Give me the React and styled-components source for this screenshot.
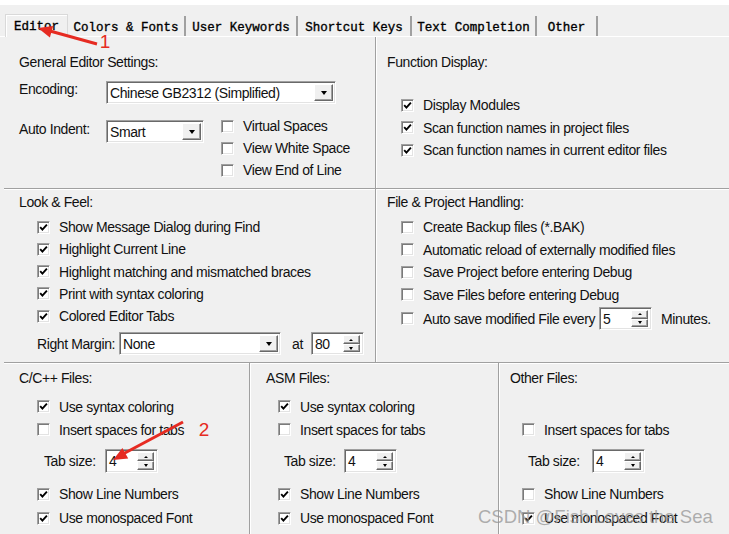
import React from "react";
import styled, { createGlobalStyle } from "styled-components";

const GlobalStyle = createGlobalStyle`
  html, body {
    margin: 0;
    padding: 0;
    background: #fff;
  }
  body {
    font-family: "Liberation Sans", Arial, sans-serif;
  }
`;

const Frame = styled.div`
  position: relative;
  width: 729px;
  height: 534px;
  padding-top: 5px;
  box-sizing: border-box;
  background: #fff;
  overflow: hidden;
`;

const Dialog = styled.div`
  height: 100%;
  background: #f0f0f0;
  display: flex;
  flex-direction: column;
  font-size: 14px;
  letter-spacing: -0.4px;
  color: #111;
`;

const TabBar = styled.div`
  display: flex;
  align-items: flex-end;
  height: 31px;
  padding-left: 5px;
  border-bottom: 1px solid #fff;
  flex: none;
`;

const Tab = styled.div`
  box-sizing: border-box;
  width: ${(p) => p.$w}px;
  height: ${(p) => (p.$active ? 23 : 20)}px;
  display: flex;
  align-items: center;
  justify-content: center;
  padding-top: 3px;
  font-family: "Liberation Mono", "Courier New", monospace;
  font-size: 12.5px;
  letter-spacing: 0;
  color: #000;
  -webkit-text-stroke: 0.35px #000;
  ${(p) =>
    p.$active
      ? `
    border: 1px solid #d9d9d9;
    border-bottom: none;
    box-shadow: inset 1px 1px 0 #fff;
    margin-bottom: -1px;
    padding-top: 1px;
    background: #f0f0f0;
  `
      : `
    border-right: 2px solid #a0a0a0;
  `}
`;

const Body = styled.div`
  flex: 1;
  display: flex;
  flex-direction: column;
  padding-left: 4px;
`;

const Row = styled.div`
  box-sizing: border-box;
  display: grid;
  grid-template-columns: ${(p) => p.$cols};
  height: ${(p) => (p.$h ? `${p.$h}px` : "auto")};
  flex: ${(p) => (p.$h ? "none" : "1")};
  ${(p) =>
    p.$line &&
    `
    border-bottom: 1px solid #a0a0a0;
    box-shadow: 0 1px 0 #fff;
  `}
`;

const Panel = styled.div`
  box-sizing: border-box;
  display: flex;
  flex-direction: column;
  align-items: flex-start;
  padding: ${(p) => p.$top}px 0 0 ${(p) => p.$left}px;
  ${(p) =>
    p.$divider &&
    `
    border-right: 1px solid #a0a0a0;
    box-shadow: 1px 0 0 #fff;
  `}
`;

const Title = styled.div`
  height: 16px;
  line-height: 16px;
  white-space: nowrap;
`;

const Line = styled.div`
  display: flex;
  align-items: ${(p) => p.$align || "center"};
  margin-top: ${(p) => p.$mt || 0}px;
  margin-left: ${(p) => p.$ml || 0}px;
  white-space: nowrap;
`;

const Label = styled.span`
  display: inline-block;
  width: ${(p) => (p.$w ? `${p.$w}px` : "auto")};
  margin-top: ${(p) => p.$mt || 0}px;
  margin-left: ${(p) => p.$ml || 0}px;
  line-height: 16px;
  flex: none;
`;

const CheckRow = styled.div`
  display: flex;
  align-items: center;
  height: ${(p) => p.$h}px;
  white-space: nowrap;
  visibility: ${(p) => (p.$hidden ? "hidden" : "visible")};
`;

const CheckColumn = styled.div`
  display: flex;
  flex-direction: column;
  margin-top: ${(p) => p.$mt || 0}px;
  margin-left: ${(p) => p.$ml || 0}px;
`;

const Box = styled.span`
  box-sizing: border-box;
  width: 13px;
  height: 13px;
  flex: none;
  margin-right: 9px;
  background: #fff;
  border: 1px solid;
  border-color: #a0a0a0 #fff #fff #a0a0a0;
  box-shadow: inset 1px 1px 0 #7a7a7a, inset -1px -1px 0 #e3e3e3;
  display: flex;
  align-items: center;
  justify-content: center;
`;

const Field = styled.div`
  box-sizing: border-box;
  width: ${(p) => p.$w}px;
  height: ${(p) => p.$h || 23}px;
  margin-top: ${(p) => p.$mt || 0}px;
  margin-left: ${(p) => p.$ml || 0}px;
  flex: none;
  display: flex;
  align-items: center;
  background: #fff;
  border: 1px solid;
  border-color: #a0a0a0 #fff #fff #a0a0a0;
  box-shadow: inset 1px 1px 0 #696969, inset -1px -1px 0 #e3e3e3;
  padding: 2px 2px 2px 3px;
`;

const FieldText = styled.span`
  flex: 1;
  line-height: 16px;
`;

const DropButton = styled.span`
  box-sizing: border-box;
  width: 19px;
  height: 100%;
  background: #f0f0f0;
  border: 1px solid;
  border-color: #fff #696969 #696969 #fff;
  box-shadow: inset -1px -1px 0 #a0a0a0;
  display: flex;
  align-items: center;
  justify-content: center;
`;

const Arrow = styled.span`
  width: 0;
  height: 0;
  border-left: ${(p) => p.$s}px solid transparent;
  border-right: ${(p) => p.$s}px solid transparent;
  ${(p) =>
    p.$up
      ? `border-bottom: ${p.$s}px solid #000;`
      : `border-top: ${p.$s + 1}px solid #000;`}
`;

const SpinButtons = styled.span`
  display: flex;
  flex-direction: column;
  width: 17px;
  height: 100%;
  margin-right: 1px;
`;

const SpinButton = styled.span`
  box-sizing: border-box;
  flex: 1;
  background: #f0f0f0;
  border: 1px solid;
  border-color: #fff #696969 #696969 #fff;
  box-shadow: inset -1px -1px 0 #a0a0a0;
  display: flex;
  align-items: center;
  justify-content: center;
`;

const Overlay = styled.svg`
  position: absolute;
  left: 0;
  top: 0;
  pointer-events: none;
`;

const Watermark = styled.span`
  position: absolute;
  left: 478px;
  top: 506px;
  font-family: "Liberation Sans", Arial, sans-serif;
  font-size: 18.5px;
  color: rgba(150, 150, 150, 0.75);
  white-space: nowrap;
  pointer-events: none;
`;

const Check = ({ checked, label, h = 22, hidden }) => (
  <CheckRow $h={h} $hidden={hidden}>
    <Box>
      {checked && (
        <svg width="9" height="9" viewBox="0 0 9 9">
          <path
            d="M1.2 4.2 L3.4 6.6 L7.9 1.6"
            fill="none"
            stroke="#000"
            strokeWidth="1.9"
          />
        </svg>
      )}
    </Box>
    {label}
  </CheckRow>
);

const Select = ({ w, value, mt, ml }) => (
  <Field $w={w} $mt={mt} $ml={ml}>
    <FieldText>{value}</FieldText>
    <DropButton>
      <Arrow $s={3.5} />
    </DropButton>
  </Field>
);

const Spin = ({ value, h, mt, ml }) => (
  <Field $w={53} $h={h} $mt={mt} $ml={ml}>
    <FieldText>{value}</FieldText>
    <SpinButtons>
      <SpinButton>
        <Arrow $s={2} $up />
      </SpinButton>
      <SpinButton>
        <Arrow $s={2} />
      </SpinButton>
    </SpinButtons>
  </Field>
);

const tabs = [
  { name: "Editor", w: 63, active: true },
  { name: "Colors & Fonts", w: 118 },
  { name: "User Keywords", w: 112 },
  { name: "Shortcut Keys", w: 114 },
  { name: "Text Completion", w: 125 },
  { name: "Other", w: 61 },
];

const fileColumns = [
  {
    title: "C/C++ Files:",
    left: 15,
    indent: 18,
    tabIndent: 25,
    labelW: 61,
    divider: true,
    syntax: true,
    spaces: false,
    lines: true,
    mono: true,
  },
  {
    title: "ASM Files:",
    left: 16,
    indent: 12,
    tabIndent: 18,
    labelW: 60,
    divider: true,
    syntax: true,
    spaces: false,
    lines: true,
    mono: true,
  },
  {
    title: "Other Files:",
    left: 11,
    indent: 12,
    tabIndent: 18,
    labelW: 64,
    noSyntax: true,
    spaces: false,
    lines: false,
    mono: true,
  },
];

const App = () => {
  return (
    <Frame>
      <GlobalStyle />
      <Dialog>
        <TabBar>
          {tabs.map((t) => (
            <Tab key={t.name} $w={t.w} $active={t.active}>
              {t.name}
            </Tab>
          ))}
        </TabBar>
        <Body>
          <Row $cols="372px 1fr" $h={152} $line>
            <Panel $top={17} $left={15} $divider>
              <Title>General Editor Settings:</Title>
              <Line $align="flex-start" $mt={11}>
                <Label $w={87}>Encoding:</Label>
                <Select w={230} value="Chinese GB2312 (Simplified)" />
              </Line>
              <Line $align="flex-start" $mt={11}>
                <Label $w={87} $mt={6}>
                  Auto Indent:
                </Label>
                <Select w={98} value="Smart" mt={5} />
                <CheckColumn $ml={17}>
                  <Check label="Virtual Spaces" />
                  <Check label="View White Space" />
                  <Check label="View End of Line" />
                </CheckColumn>
              </Line>
            </Panel>
            <Panel $top={17} $left={11}>
              <Title>Function Display:</Title>
              <CheckColumn $mt={24} $ml={14}>
                <Check checked h={22.5} label="Display Modules" />
                <Check
                  checked
                  h={22.5}
                  label="Scan function names in project files"
                />
                <Check
                  checked
                  h={22.5}
                  label="Scan function names in current editor files"
                />
              </CheckColumn>
            </Panel>
          </Row>
          <Row $cols="372px 1fr" $h={174} $line>
            <Panel $top={5} $left={15} $divider>
              <Title>Look &amp; Feel:</Title>
              <CheckColumn $mt={6} $ml={18}>
                <Check checked h={22.25} label="Show Message Dialog during Find" />
                <Check checked h={22.25} label="Highlight Current Line" />
                <Check
                  checked
                  h={22.25}
                  label="Highlight matching and mismatched braces"
                />
                <Check checked h={22.25} label="Print with syntax coloring" />
                <Check checked h={22.25} label="Colored Editor Tabs" />
              </CheckColumn>
              <Line $mt={5} $ml={18}>
                <Label $w={82}>Right Margin:</Label>
                <Select w={162} value="None" />
                <Label $ml={11}>at</Label>
                <Spin value="80" ml={8} />
              </Line>
            </Panel>
            <Panel $top={5} $left={11}>
              <Title>File &amp; Project Handling:</Title>
              <CheckColumn $mt={6} $ml={14}>
                <Check h={22.5} label="Create Backup files (*.BAK)" />
                <Check
                  h={22.5}
                  label="Automatic reload of externally modified files"
                />
                <Check h={22.5} label="Save Project before entering Debug" />
                <Check h={22.5} label="Save Files before entering Debug" />
                <CheckRow $h={25}>
                  <Box />
                  Auto save modified File every
                  <Spin value="5" ml={4} />
                  <Label $ml={9}>Minutes.</Label>
                </CheckRow>
              </CheckColumn>
            </Panel>
          </Row>
          <Row $cols="246px 249px 1fr">
            {fileColumns.map((c) => (
              <Panel key={c.title} $top={7} $left={c.left} $divider={c.divider}>
                <Title>{c.title}</Title>
                <CheckColumn $mt={9} $ml={c.indent}>
                  <Check
                    checked={c.syntax}
                    h={23}
                    hidden={c.noSyntax}
                    label="Use syntax coloring"
                  />
                  <Check checked={c.spaces} h={23} label="Insert spaces for tabs" />
                </CheckColumn>
                <Line $mt={8} $ml={c.tabIndent}>
                  <Label $w={c.labelW}>Tab size:</Label>
                  <Spin value="4" h={24} />
                </Line>
                <CheckColumn $mt={9} $ml={c.indent}>
                  <Check checked={c.lines} h={24} label="Show Line Numbers" />
                  <Check checked={c.mono} h={24} label="Use monospaced Font" />
                </CheckColumn>
              </Panel>
            ))}
          </Row>
        </Body>
      </Dialog>

      <Overlay width="729" height="534" viewBox="0 0 729 534">
        <line x1="97" y1="44" x2="50" y2="31" stroke="#e62b22" strokeWidth="3" />
        <polygon points="38,28 53.1,25.9 49.9,37.5" fill="#e62b22" />
        <text
          x="105"
          y="48"
          fill="#e62b22"
          fontSize="19"
          fontFamily="Liberation Sans, Arial, sans-serif"
          textAnchor="middle"
        >
          1
        </text>
        <line x1="183" y1="422" x2="123" y2="454" stroke="#e62b22" strokeWidth="3" />
        <polygon points="113,460 128.2,458.6 122.4,448" fill="#e62b22" />
        <text
          x="204"
          y="436"
          fill="#e62b22"
          fontSize="19"
          fontFamily="Liberation Sans, Arial, sans-serif"
          textAnchor="middle"
        >
          2
        </text>
      </Overlay>
      <Watermark>CSDN @Fish Loves the Sea</Watermark>
    </Frame>
  );
};

export default App;
